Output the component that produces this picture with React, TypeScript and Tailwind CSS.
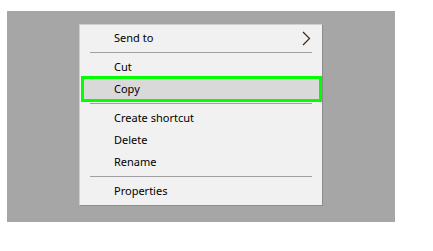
const font = { fontFamily: '"Noto Sans", "Open Sans", "Liberation Sans", sans-serif' };

function Item({ label, chevron }: { label: string; chevron?: boolean }) {
  return (
    <div className="relative flex h-[22px] items-center pl-[34px] pr-[10px] text-[11px] text-black">
      <span className="relative -top-px flex-1 leading-none">{label}</span>
      {chevron && (
        <svg width="9" height="15" viewBox="0 0 9 15" className="mr-[1px]">
          <path d="M1 1 L7.5 7.5 L1 14" fill="none" stroke="#3a2a1a" strokeWidth="1.2" />
        </svg>
      )}
    </div>
  );
}

function Separator() {
  return (
    <div className="flex h-[7px] items-center px-[10px]">
      <div className="h-px w-full bg-[#a0a0a0]" />
    </div>
  );
}

export default function App() {
  return (
    <div className="h-[251px] w-[433px] bg-white pl-[7px] pt-[11px]" style={font}>
      <div className="h-[211px] w-[388px] bg-[#a6a6a6] pl-[72px] pt-[13px]">
        <div className="h-[182px] w-[244px] border border-[#cfcfcf] border-b-[#8c8c8c] border-r-[#8c8c8c] bg-[#f1f1f1] pt-[2px]">
          <Item label="Send to" chevron />
          <Separator />
          <Item label="Cut" />
          <div className="relative flex h-[22px] items-center pl-[34px] text-[11px] text-black">
            <span className="absolute -top-[2px] left-px right-0 h-[26px] border-[3px] border-[#00ff00] bg-[#d9d9d9]" />
            <span className="relative -top-px leading-none">Copy</span>
          </div>
          <Separator />
          <Item label="Create shortcut" />
          <Item label="Delete" />
          <Item label="Rename" />
          <Separator />
          <Item label="Properties" />
        </div>
      </div>
    </div>
  );
}
